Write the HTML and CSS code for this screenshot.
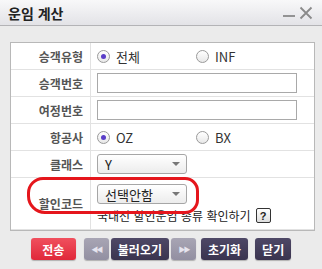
FILE: index.html
```html
<!DOCTYPE html>
<html lang="ko">
  <head>
    <meta charset="UTF-8" />
    <meta name="viewport" content="width=device-width, initial-scale=1.0" />
    <title>운임 계산</title>
    <link rel="stylesheet" href="styles.css">
  </head>
  <body>
    <div class="window">
      <div class="title-bar">
        <span class="title">운임 계산</span>
        <div class="win-tools">
          <svg width="14" height="14" viewBox="0 0 14 14"><path d="M1 10h12" stroke="#8a8a8a" stroke-width="1.8"/></svg>
          <svg width="14" height="14" viewBox="0 0 14 14"><path d="M1.5 1.5l11 11M12.5 1.5l-11 11" stroke="#8a8a8a" stroke-width="1.8"/></svg>
        </div>
      </div>

      <div class="content">
        <div class="form-table">
          <div class="row">
            <div class="label">승객유형</div>
            <div class="value">
              <label class="radio"><span class="dot checked"></span>전체</label>
              <label class="radio"><span class="dot"></span>INF</label>
            </div>
          </div>
          <div class="row">
            <div class="label">승객번호</div>
            <div class="value"><input type="text" class="text-input" /></div>
          </div>
          <div class="row">
            <div class="label">여정번호</div>
            <div class="value"><input type="text" class="text-input" /></div>
          </div>
          <div class="row">
            <div class="label">항공사</div>
            <div class="value">
              <label class="radio"><span class="dot checked"></span>OZ</label>
              <label class="radio"><span class="dot"></span>BX</label>
            </div>
          </div>
          <div class="row">
            <div class="label">클래스</div>
            <div class="value">
              <div class="select"><span>Y</span><i class="caret"></i></div>
            </div>
          </div>
          <div class="row tall">
            <div class="label">할인코드</div>
            <div class="value stack">
              <div class="select"><span>선택안함</span><i class="caret"></i></div>
              <div class="help">국내선 할인운임 종류 확인하기 <span class="help-btn">?</span></div>
            </div>
          </div>
          <div class="mark"></div>
        </div>

        <div class="buttons">
          <button class="btn red">전송</button>
          <button class="btn gray nav">&#9664;&#9664;</button>
          <button class="btn dark">불러오기</button>
          <button class="btn gray nav">&#9654;&#9654;</button>
          <button class="btn dark">초기화</button>
          <button class="btn dark">닫기</button>
        </div>
      </div>
    </div>
  </body>
</html>
```

FILE: styles.css
```css
* {
  margin: 0;
  padding: 0;
  box-sizing: border-box;
}

body {
  font-family: "Noto Sans CJK KR", "Noto Sans", sans-serif;
  background-color: #ebebeb;
  color: #333;
  width: 322px;
  height: 269px;
  overflow: hidden;
}

.title-bar {
  height: 26px;
  background: linear-gradient(#f8f8f9, #e3e3e7);
  border-bottom: 1px solid #b3b3b6;
  display: flex;
  align-items: center;
  justify-content: space-between;
  padding: 0 9px 0 8px;
}

.title {
  font-size: 14px;
  font-weight: bold;
  color: #222;
  line-height: 1;
}

.win-tools {
  display: flex;
  gap: 3px;
}

.content {
  padding: 16px 8px 0 10px;
}

.form-table {
  position: relative;
  width: 305px;
  background-color: #fff;
  border: 1px solid #b8b8b8;
}

.row {
  display: grid;
  grid-template-columns: 80px 1fr;
  height: 27px;
  border-bottom: 1px solid #e2e2e2;
}

.row:last-of-type {
  border-bottom: none;
}

.row.tall {
  height: 52px;
}

.label {
  border-right: 1px solid #e2e2e2;
  text-align: right;
  padding-right: 7px;
  font-size: 12px;
  font-weight: bold;
  color: #555;
  display: flex;
  align-items: center;
  justify-content: flex-end;
}

.value {
  display: flex;
  align-items: center;
  padding-left: 6px;
}

.value.stack {
  flex-direction: column;
  align-items: flex-start;
  justify-content: center;
  gap: 3px;
  padding-top: 1px;
}

.radio {
  display: flex;
  align-items: center;
  font-size: 13px;
  color: #333;
  width: 99px;
}

.dot {
  width: 13px;
  height: 13px;
  border: 1px solid #9a9a9a;
  border-radius: 50%;
  background: linear-gradient(#fff, #e8e8e8);
  margin-right: 6px;
  position: relative;
}

.dot.checked::after {
  content: "";
  position: absolute;
  left: 3px;
  top: 3px;
  width: 5px;
  height: 5px;
  border-radius: 50%;
  background-color: #5a3ec8;
}

.text-input {
  width: 200px;
  height: 20px;
  border: 1px solid #a9a9a9;
  background: #fff;
}

.select {
  width: 90px;
  height: 20px;
  border: 1px solid #a6a6a6;
  border-radius: 3px;
  background: linear-gradient(#ffffff, #ececec);
  display: flex;
  align-items: center;
  justify-content: space-between;
  padding: 0 6px 0 7px;
  font-size: 13px;
  color: #222;
}

.caret {
  width: 0;
  height: 0;
  border-left: 4px solid transparent;
  border-right: 4px solid transparent;
  border-top: 4px solid #777;
}

.help {
  font-size: 12px;
  color: #222;
  display: flex;
  align-items: center;
  white-space: nowrap;
}

.help-btn {
  display: inline-flex;
  align-items: center;
  justify-content: center;
  width: 15px;
  height: 15px;
  margin-left: 5px;
  border: 1px solid #333;
  border-radius: 2px;
  background: linear-gradient(#fff, #ddd);
  font-size: 11px;
  font-weight: bold;
  font-family: "Liberation Sans", sans-serif;
}

/* red annotation mark */
.mark {
  position: absolute;
  left: 16px;
  top: 134px;
  width: 172px;
  height: 37px;
  border: 3px solid #e5161c;
  border-radius: 16px 14px 14px 18px;
}

.buttons {
  display: flex;
  justify-content: center;
  margin-top: 7px;
  padding-right: 2px;
}

.btn {
  height: 22px;
  border: none;
  border-radius: 3px;
  color: #fff;
  font-family: inherit;
  font-size: 12px;
  font-weight: bold;
  padding: 0 7px;
  box-shadow: 0 1px 1px rgba(0, 0, 0, 0.25);
}

.btn.red {
  width: 45px;
  background: linear-gradient(#f0505e, #e0283a);
  margin-right: 6px;
}

.btn.gray {
  width: 25px;
  background: linear-gradient(#a8a5b4, #928fa1);
  color: #e6e4ee;
  font-size: 7px;
  letter-spacing: -2px;
  padding: 0;
}

.btn.dark {
  background: linear-gradient(#4e4866, #3a344f);
}

.buttons .btn + .btn {
  margin-left: 2px;
}

.buttons .btn.gray + .btn.dark + .btn.gray + .btn.dark {
  margin-left: 5px;
}

.buttons .btn.dark:last-child {
  margin-left: 7px;
}
```
